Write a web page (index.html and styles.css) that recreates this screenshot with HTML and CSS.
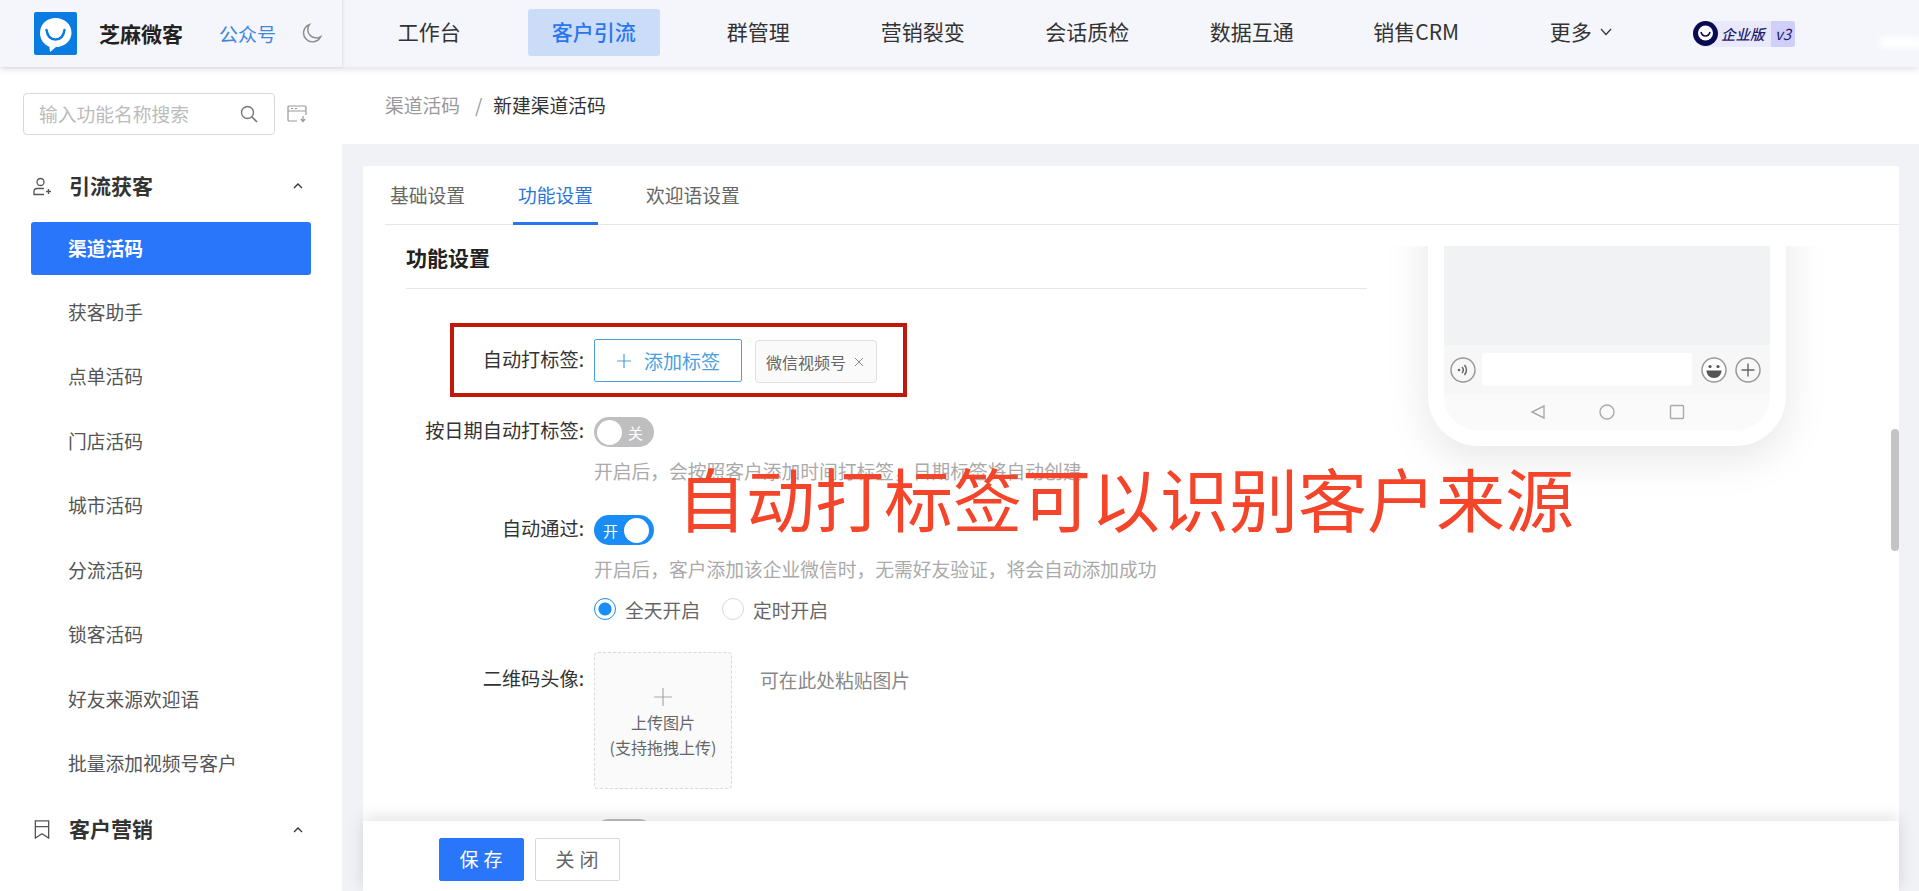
FILE: index.html
```html
<!DOCTYPE html>
<html lang="zh-CN">
<head>
    <meta charset="UTF-8">
    <title>新建渠道活码</title>
    <link rel="stylesheet" href="styles.css">
</head>
<body>
<div class="top-bar">
    <div class="brand">
        <svg class="brand-logo" viewBox="0 0 43 43">
            <rect width="43" height="43" rx="2" fill="#0a7be0"/>
            <path d="M21.5 6C12.5 6 6 12.6 6 21c0 6.400 3.700 11.500 9.300 13.800L16 40l6-5c9-.2 15.500-6.300 15.500-14.500C37.500 12.400 30.500 6 21.500 6z" fill="#fff"/>
            <path d="M12.500 18c1 6.500 4.500 9.500 9 9.500s8-3 9-9.500" fill="none" stroke="#0a7be0" stroke-width="2.400" stroke-linecap="round"/>
        </svg>
        <span class="brand-name">芝麻微客</span>
        <a class="brand-link">公众号</a>
        <svg class="moon-icon" viewBox="0 0 20 20">
            <path d="M8 1.500A8.500 8.500 0 1 0 18.700 13 8 8 0 0 1 8 1.500z" fill="none" stroke="#8c8c8c" stroke-width="1.400"/>
        </svg>
    </div>
    <div class="top-nav">
        <a class="nav-item">工作台</a>
        <a class="nav-item active">客户引流</a>
        <a class="nav-item">群管理</a>
        <a class="nav-item">营销裂变</a>
        <a class="nav-item">会话质检</a>
        <a class="nav-item">数据互通</a>
        <a class="nav-item">销售CRM</a>
        <a class="nav-item">更多
            <svg class="more-arrow" viewBox="0 0 12 8"><path d="M1 1l5 5.500L11 1" fill="none" stroke="#333" stroke-width="1.200"/></svg>
        </a>
    </div>
    <div class="edition">
        <svg class="edition-logo" viewBox="0 0 25 25">
            <circle cx="12.500" cy="12.500" r="12.500" fill="#0a0a50"/>
            <circle cx="12.500" cy="12" r="7.500" fill="#fff"/>
            <path d="M8 11c.8 3 2.500 4 4.500 4s3.700-1 4.500-4" fill="none" stroke="#0a0a50" stroke-width="1.600"/>
        </svg>
        <span class="edition-name">企业版</span>
        <span class="edition-ver">v3</span>
    </div>
    <div class="smudge"></div>
</div>

<div class="page">
    <div class="side-bar">
        <div class="side-search">
            <div class="search-box">
                <span class="search-text">输入功能名称搜索</span>
                <svg class="search-icon" viewBox="0 0 18 18">
                    <circle cx="7.500" cy="7.500" r="6" fill="none" stroke="#777" stroke-width="1.400"/>
                    <path d="M12 12l5 5" stroke="#777" stroke-width="1.600"/>
                </svg>
            </div>
            <svg class="save-icon" viewBox="0 0 20 18">
                <path d="M10 16H2a1 1 0 0 1-1-1V2a1 1 0 0 1 1-1h16a1 1 0 0 1 1 1v8M1 6h18" fill="none" stroke="#999" stroke-width="1.200"/>
                <path d="M4 3.500h2M8 3.500h2M16 11v5M13.800 14l2.200 2.500 2.200-2.500" fill="none" stroke="#999" stroke-width="1.200"/>
            </svg>
        </div>
        <div class="side-group">
            <svg class="group-icon" viewBox="0 0 18 18">
                <circle cx="7.500" cy="4.500" r="3.500" fill="none" stroke="#555" stroke-width="1.300"/>
                <path d="M11 11H4a3 3 0 0 0-3 3v3h10M13 14h5M15.500 11.500v5" fill="none" stroke="#555" stroke-width="1.300"/>
            </svg>
            <span class="group-name">引流获客</span>
            <svg class="group-arrow" viewBox="0 0 10 6"><path d="M1 5l4-4 4 4" fill="none" stroke="#333" stroke-width="1.300"/></svg>
        </div>
        <div class="side-list">
            <a class="side-item active">渠道活码</a>
            <a class="side-item">获客助手</a>
            <a class="side-item">点单活码</a>
            <a class="side-item">门店活码</a>
            <a class="side-item">城市活码</a>
            <a class="side-item">分流活码</a>
            <a class="side-item">锁客活码</a>
            <a class="side-item">好友来源欢迎语</a>
            <a class="side-item">批量添加视频号客户</a>
        </div>
        <div class="side-group">
            <svg class="group-icon" viewBox="0 0 18 20">
                <path d="M2 19V1h14v18l-7-4.500zM2 7h14" fill="none" stroke="#555" stroke-width="1.400"/>
            </svg>
            <span class="group-name">客户营销</span>
            <svg class="group-arrow" viewBox="0 0 10 6"><path d="M1 5l4-4 4 4" fill="none" stroke="#333" stroke-width="1.300"/></svg>
        </div>
    </div>

    <div class="main">
        <div class="bread">
            <span class="bread-prev">渠道活码</span>
            <span class="bread-sep">/</span>
            <span class="bread-now">新建渠道活码</span>
        </div>
        <div class="panel">
            <div class="card">
                <div class="tabs">
                    <a class="tab">基础设置</a>
                    <a class="tab active">功能设置</a>
                    <a class="tab">欢迎语设置</a>
                </div>
                <div class="card-body">
                    <div class="form-title">功能设置</div>

                    <div class="form-row row-tag">
                        <div class="form-label">自动打标签:</div>
                        <div class="add-tag">
                            <svg class="add-plus" viewBox="0 0 16 16"><path d="M8 1v14M1 8h14" stroke="#4a9fe0" stroke-width="1.200"/></svg>
                            添加标签
                        </div>
                        <div class="tag">微信视频号
                            <svg class="tag-close" viewBox="0 0 10 10"><path d="M1 1l8 8M9 1L1 9" stroke="#888" stroke-width="1"/></svg>
                        </div>
                    </div>

                    <div class="form-row row-date">
                        <div class="form-label">按日期自动打标签:</div>
                        <div class="form-ctrl">
                            <div class="switch"><span class="switch-knob"></span><span class="switch-text">关</span></div>
                            <div class="help">开启后，会按照客户添加时间打标签，日期标签将自动创建</div>
                        </div>
                    </div>

                    <div class="form-row row-pass">
                        <div class="form-label">自动通过:</div>
                        <div class="form-ctrl">
                            <div class="switch on"><span class="switch-text">开</span><span class="switch-knob"></span></div>
                            <div class="help">开启后，客户添加该企业微信时，无需好友验证，将会自动添加成功</div>
                            <div class="radio-row">
                                <span class="radio checked"></span><span class="radio-text">全天开启</span>
                                <span class="radio"></span><span class="radio-text">定时开启</span>
                            </div>
                        </div>
                    </div>

                    <div class="form-row row-avatar">
                        <div class="form-label">二维码头像:</div>
                        <div class="upload">
                            <svg class="upload-plus" viewBox="0 0 18 18"><path d="M9 0v18M0 9h18" stroke="#aaa" stroke-width="1.200"/></svg>
                            <span>上传图片</span>
                            <span>(支持拖拽上传)</span>
                        </div>
                        <div class="upload-tip">可在此处粘贴图片</div>
                    </div>

                    <div class="form-row row-last">
                        <div class="form-label">好友关系:</div>
                        <div class="switch"><span class="switch-knob"></span><span class="switch-text">关</span></div>
                    </div>

                    <div class="phone">
                        <div class="phone-screen">
                            <div class="phone-chat"></div>
                            <div class="phone-input">
                                <svg class="phone-icon" viewBox="0 0 26 26">
                                    <circle cx="13" cy="13" r="12" fill="none" stroke="#999" stroke-width="1.500"/>
                                    <circle cx="9" cy="13" r="1.300" fill="#666"/>
                                    <path d="M12 10a4.500 4.500 0 0 1 0 6M14.500 8a7.500 7.500 0 0 1 0 10" fill="none" stroke="#666" stroke-width="1.500"/>
                                </svg>
                                <div class="phone-text"></div>
                                <svg class="phone-icon" viewBox="0 0 26 26">
                                    <circle cx="13" cy="13" r="12" fill="#fff" stroke="#999" stroke-width="1.500"/>
                                    <circle cx="9" cy="9.500" r="1.600" fill="#555"/>
                                    <circle cx="17" cy="9.500" r="1.600" fill="#555"/>
                                    <path d="M5.500 13.500h15c0 4-3 7.500-7.500 7.500s-7.500-3.500-7.500-7.500z" fill="#555"/>
                                </svg>
                                <svg class="phone-icon" viewBox="0 0 26 26">
                                    <circle cx="13" cy="13" r="12" fill="none" stroke="#999" stroke-width="1.500"/>
                                    <path d="M13 6.500v13M6.500 13h13" stroke="#666" stroke-width="1.400"/>
                                </svg>
                            </div>
                            <div class="phone-nav">
                                <svg class="nav-icon" viewBox="0 0 16 16"><path d="M14 2v12L2 8z" fill="none" stroke="#aaa" stroke-width="1.400"/></svg>
                                <svg class="nav-icon" viewBox="0 0 16 16"><circle cx="8" cy="8" r="7" fill="none" stroke="#aaa" stroke-width="1.400"/></svg>
                                <svg class="nav-icon" viewBox="0 0 16 16"><rect x="1.500" y="1.500" width="13" height="13" rx="1" fill="none" stroke="#aaa" stroke-width="1.400"/></svg>
                            </div>
                        </div>
                    </div>

                    <div class="red-box"></div>
                    <div class="red-text">自动打标签可以识别客户来源</div>
                    <div class="scroll-thumb"></div>
                </div>
                <div class="card-footer">
                    <a class="btn btn-save">保存</a>
                    <a class="btn">关闭</a>
                </div>
            </div>
        </div>
    </div>
</div>
</body>
</html>
```

FILE: styles.css
```css
* {
    box-sizing: border-box;
}

html, body {
    height: 100%;
}

body {
    margin: 0;
    overflow: hidden;
    display: flex;
    flex-direction: column;
    background: #fff;
    color: #333;
    font-family: "Noto Sans CJK SC", "Liberation Sans", sans-serif;
    font-size: 18.75px;
}

/* top bar */
.top-bar {
    position: relative;
    z-index: 5;
    flex: none;
    height: 67px;
    display: flex;
    align-items: center;
    background: #f5f6fb;
    box-shadow: 0 2px 7px rgba(0, 0, 0, .13);
}

.brand {
    flex: none;
    width: 342px;
    height: 100%;
    padding-left: 34px;
    display: flex;
    align-items: center;
    box-shadow: 1px 0 3px rgba(0, 0, 0, .1);
}

.brand-logo {
    width: 43px;
    height: 43px;
}

.brand-name {
    margin-left: 22px;
    padding-bottom: 1px;
    font-size: 21px;
    font-weight: 700;
    color: #222;
}

.brand-link {
    margin-left: 36px;
    padding-bottom: 1px;
    font-size: 19px;
    color: #3f86e0;
}

.moon-icon {
    width: 21px;
    height: 21px;
    margin-left: 25px;
}

.top-nav {
    margin: 0 0 3px 5px;
    display: grid;
    grid-template-columns: repeat(8, 164.5px);
}

.nav-item {
    height: 47px;
    padding-bottom: 3px;
    display: flex;
    align-items: center;
    justify-content: center;
    font-size: 21px;
    color: #333;
}

.nav-item.active {
    width: 132px;
    justify-self: center;
    background: #cbdcf9;
    border-radius: 3px;
    color: #2a76f0;
    font-weight: 500;
}

.more-arrow {
    width: 12px;
    height: 8px;
    margin-left: 8px;
    margin-top: 3px;
}

.edition {
    margin-left: 30px;
    height: 26px;
    display: flex;
    align-items: center;
    background: #e9e9fb;
    border-radius: 13px 3px 3px 13px;
}

.edition-logo {
    width: 25px;
    height: 25px;
}

.edition-name {
    margin-left: 3px;
    width: 50px;
    font-size: 14.5px;
    font-weight: 500;
    font-style: italic;
    color: #1c1c70;
}

.edition-ver {
    width: 24px;
    height: 26px;
    line-height: 25px;
    text-align: center;
    background: #cfcffa;
    border-radius: 0 3px 3px 0;
    font-size: 15px;
    font-style: italic;
    color: #1c1c70;
}

.smudge {
    position: absolute;
    right: -6px;
    top: 37px;
    width: 46px;
    height: 11px;
    background: #fff;
    border-radius: 6px;
    filter: blur(3px);
}

/* layout */
.page {
    flex: 1;
    min-height: 0;
    display: flex;
}

.side-bar {
    flex: none;
    width: 342px;
    overflow: hidden;
}

.side-search {
    margin: 26px 0 24px 23px;
    display: flex;
    align-items: center;
}

.search-box {
    width: 252px;
    height: 42px;
    padding: 0 16px 0 15px;
    display: flex;
    align-items: center;
    justify-content: space-between;
    border: 1px solid #d9d9d9;
    border-radius: 4px;
}

.search-text {
    padding-bottom: 2px;
    font-size: 18.75px;
    color: #bbb;
}

.search-icon {
    width: 18px;
    height: 18px;
}

.save-icon {
    width: 20px;
    height: 18px;
    margin-left: 12px;
}

.side-group {
    height: 54px;
    padding-left: 33px;
    display: flex;
    align-items: center;
}

.group-icon {
    width: 18px;
    height: 19px;
}

.group-name {
    margin-left: 18px;
    padding-bottom: 3px;
    font-size: 21px;
    font-weight: 700;
    color: #333;
}

.group-arrow {
    width: 10px;
    height: 6px;
    margin-left: 140px;
}

.side-list {
    margin: 9px 0 0 31px;
}

.side-item {
    display: block;
    width: 280px;
    height: 53px;
    margin-bottom: 11.5px;
    padding-left: 37px;
    line-height: 50px;
    border-radius: 3px;
    font-size: 18.75px;
    color: #555;
}

.side-item.active {
    line-height: 52px;
    background: #2a76fb;
    color: #fff;
    font-weight: 700;
}

.main {
    flex: 1;
    min-width: 0;
    display: flex;
    flex-direction: column;
}

.bread {
    flex: none;
    height: 77px;
    padding: 0 0 2px 43px;
    display: flex;
    align-items: center;
    font-size: 18.75px;
}

.bread-prev {
    color: #999;
}

.bread-sep {
    margin: 0 11px 0 15px;
    color: #999;
}

.bread-now {
    color: #333;
}

.panel {
    flex: 1;
    min-height: 0;
    padding: 22px 20px 0 21px;
    background: #f1f2f6;
}

.card {
    height: 100%;
    display: flex;
    flex-direction: column;
    background: #fff;
}

/* tabs */
.tabs {
    flex: none;
    height: 59px;
    margin-left: 22px;
    display: flex;
    gap: 43px;
    border-bottom: 1px solid #e6e7eb;
}

.tab {
    height: 59px;
    padding: 0 5px;
    line-height: 58px;
    font-size: 18.75px;
    color: #666;
}

.tab.active {
    color: #2a76d8;
    border-bottom: 3px solid #2a76f0;
}

/* form */
.card-body {
    position: relative;
    flex: 1;
    min-height: 0;
    margin-top: 21px;
    padding-left: 43px;
    overflow: hidden;
}

.form-title {
    width: 961px;
    height: 43px;
    line-height: 22px;
    border-bottom: 1px solid #e6e7eb;
    font-size: 21px;
    font-weight: 700;
    color: #222;
}

.form-row {
    display: flex;
    align-items: flex-start;
}

.form-label {
    flex: none;
    width: 178px;
    margin-right: 10px;
    text-align: right;
    font-size: 19.2px;
    color: #333;
}

.form-ctrl {
    display: flex;
    flex-direction: column;
    align-items: flex-start;
}

.row-tag {
    margin-top: 50px;
}

.row-tag .form-label {
    line-height: 41px;
}

.row-date {
    margin-top: 34px;
}

.row-date .form-label, .row-pass .form-label {
    line-height: 27px;
}

.row-pass {
    margin-top: 32px;
}

.row-avatar {
    margin-top: 31px;
}

.row-avatar .form-label {
    line-height: 52px;
}

.row-last {
    margin-top: 30px;
}

.row-last .form-label {
    line-height: 22px;
}

.add-tag {
    width: 148px;
    height: 43px;
    display: flex;
    align-items: center;
    justify-content: center;
    border: 1px solid #4a9fe0;
    border-radius: 2px;
    font-size: 19px;
    color: #4a9fe0;
}

.add-plus {
    width: 16px;
    height: 16px;
    margin-right: 12px;
}

.tag {
    width: 122px;
    height: 43px;
    margin: 1px 0 0 13px;
    padding-left: 10px;
    display: flex;
    align-items: center;
    background: #fafafa;
    border: 1px solid #e0e0e0;
    border-radius: 4px;
    font-size: 16px;
    color: #666;
}

.tag-close {
    width: 10px;
    height: 10px;
    margin-left: 8px;
}

.switch {
    width: 60px;
    height: 30px;
    padding: 0 3px;
    display: flex;
    align-items: center;
    gap: 6px;
    background: #bfbfbf;
    border-radius: 15px;
    font-size: 15px;
    color: #fff;
}

.switch.on {
    padding-left: 9px;
    background: #1a8cf5;
}

.switch-knob {
    flex: none;
    width: 25px;
    height: 25px;
    background: #fff;
    border-radius: 50%;
}

.help {
    margin-top: 12px;
    line-height: 24px;
    font-size: 18.75px;
    color: #aaa;
    white-space: nowrap;
}

.radio-row {
    margin-top: 16px;
    height: 24px;
    display: flex;
    align-items: center;
}

.radio {
    width: 22px;
    height: 22px;
    border: 1px solid #d9d9d9;
    border-radius: 50%;
}

.radio.checked {
    border-color: #1a8cf5;
    background: radial-gradient(circle, #1a8cf5 6px, #fff 7px);
}

.radio-text {
    margin: 0 22px 0 9px;
    font-size: 18.75px;
    color: #666;
}

.upload {
    flex: none;
    width: 138px;
    height: 137px;
    padding-top: 35px;
    display: flex;
    flex-direction: column;
    align-items: center;
    background: #fafafa;
    border: 1px dashed #d9d9d9;
    border-radius: 4px;
    font-size: 16px;
    line-height: 25px;
    color: #666;
}

.upload-plus {
    width: 18px;
    height: 18px;
    margin-bottom: 4px;
}

.upload-tip {
    margin-left: 28px;
    line-height: 56px;
    font-size: 18.75px;
    color: #888;
}

/* things lying over the form */
.phone {
    position: absolute;
    left: 1065px;
    top: -100px;
    width: 358px;
    height: 300px;
    padding: 0 16px 16px;
    background: #fff;
    border-radius: 50px;
    box-shadow: 0 12px 44px rgba(0, 0, 0, .1);
}

.phone-screen {
    height: 100%;
    display: flex;
    flex-direction: column;
    overflow: hidden;
    border-radius: 0 0 33px 33px;
}

.phone-chat {
    flex: 1;
    background: #f1f2f4;
}

.phone-input {
    flex: none;
    height: 49px;
    padding: 0 9px 0 6px;
    display: flex;
    align-items: center;
    background: #f7f7f7;
}

.phone-icon {
    flex: none;
    width: 26px;
    height: 26px;
}

.phone-icon + .phone-icon {
    margin-left: 8px;
}

.phone-text {
    width: 210px;
    height: 33px;
    margin: 0 9px 0 6px;
    background: #fff;
    border-radius: 3px;
}

.phone-nav {
    flex: none;
    height: 36px;
    display: flex;
    align-items: center;
    justify-content: center;
    gap: 53.5px;
    background: #fafafa;
}

.nav-icon {
    width: 16px;
    height: 16px;
}

.red-box {
    position: absolute;
    left: 87px;
    top: 77px;
    width: 457px;
    height: 74px;
    border: 4px solid #c0190b;
}

.red-text {
    position: absolute;
    left: 314px;
    top: 211px;
    line-height: 80px;
    font-size: 69px;
    color: #f4442a;
    white-space: nowrap;
}

.scroll-thumb {
    position: absolute;
    right: 0;
    top: 183px;
    width: 8px;
    height: 122px;
    background: #c4c4c4;
    border-radius: 4px;
}

/* footer */
.card-footer {
    position: relative;
    z-index: 1;
    flex: none;
    height: 70px;
    padding: 17px 0 0 76px;
    display: flex;
    gap: 11px;
    background: #fff;
    box-shadow: 0 -3px 16px rgba(0, 0, 0, .12);
}

.btn {
    width: 85px;
    height: 43px;
    padding-left: 4px;
    line-height: 39px;
    text-align: center;
    letter-spacing: 5px;
    background: #fff;
    border: 1px solid #d9d9d9;
    border-radius: 2px;
    font-size: 19px;
    color: #666;
}

.btn-save {
    background: #2a76fb;
    border-color: #2a76fb;
    color: #fff;
}
```
